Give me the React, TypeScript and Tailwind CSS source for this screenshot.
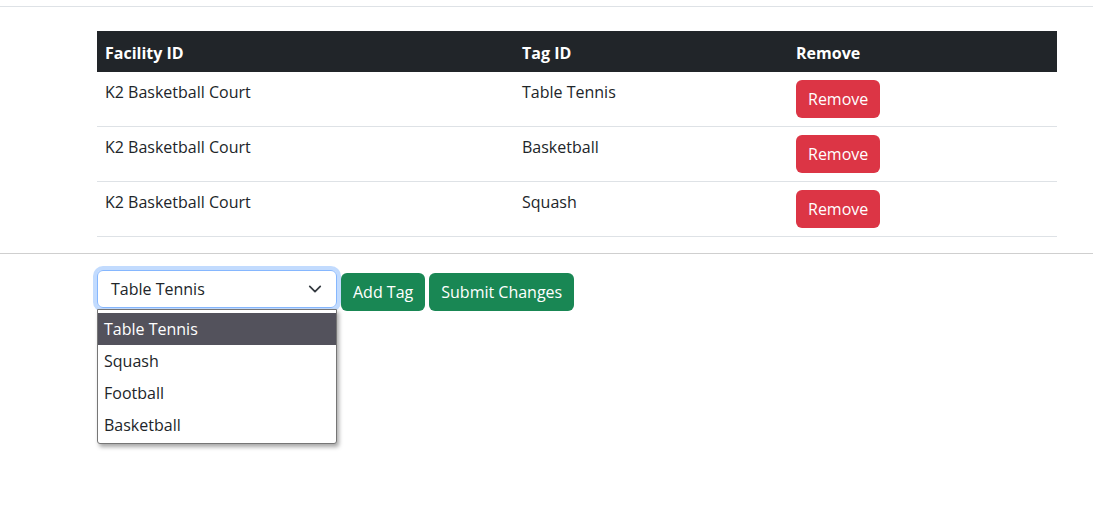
import React from "react";

const rows = ["Table Tennis", "Basketball", "Squash"];
const options = ["Table Tennis", "Squash", "Football", "Basketball"];

function TagRow({ tag }: { tag: string }) {
  return (
    <tr className="border-b border-[#dee2e6]">
      <td className="px-2 py-2 align-top leading-6">K2 Basketball Court</td>
      <td className="px-2 py-2 align-top leading-6">{tag}</td>
      <td className="px-2 py-2">
        <button className="bg-[#dc3545] text-white rounded-md px-3 h-[38px] leading-6">Remove</button>
      </td>
    </tr>
  );
}

export default function App() {
  return (
    <div className="w-[1093px] h-[518px] bg-white text-[#212529] text-base font-['Segoe_UI','Open_Sans',sans-serif] overflow-hidden">
      <div className="pt-[6px]">
        <div className="border-t border-[#dee2e6]" />
      </div>
      <div className="pl-[97px] pr-[36px] pt-6">
        <table className="w-[960px] border-collapse text-left">
          <thead>
            <tr className="bg-[#212529] text-white h-[41px]">
              <th className="px-2 pt-[2px] font-bold w-[417px]">Facility ID</th>
              <th className="px-2 pt-[2px] font-bold w-[274px]">Tag ID</th>
              <th className="px-2 pt-[2px] font-bold">Remove</th>
            </tr>
          </thead>
          <tbody>
            {rows.map((r) => (
              <TagRow key={r} tag={r} />
            ))}
          </tbody>
        </table>
      </div>
      <div className="mt-4 border-t border-[#cfcfcf]" />
      <div className="pl-[97px] pt-4 flex gap-1 items-start">
        <div className="relative">
          <div className="w-[240px] h-[38px] border border-[#86b7fe] rounded-md shadow-[0_0_0_4px_rgba(13,110,253,0.25)] flex items-center justify-between pl-[13px] pr-[14px]">
            <span>Table Tennis</span>
            <svg width="14" height="14" viewBox="0 0 16 16" fill="none" stroke="#343a40" strokeWidth="2" strokeLinecap="round" strokeLinejoin="round">
              <path d="M2 5l6 6 6-6" />
            </svg>
          </div>
          <div className="absolute left-0 top-[39px] w-[240px] bg-white border border-[#767676] rounded-b-[3px] shadow-[2px_3px_4px_rgba(0,0,0,0.35)] pt-[3px] pb-[2px]">
            {options.map((o, i) => (
              <div
                key={o}
                className={i === 0 ? "bg-[#53525c] text-white h-[32px] pl-[6px] flex items-center" : "h-[32px] pl-[6px] flex items-center"}
              >
                {o}
              </div>
            ))}
          </div>
        </div>
        <button className="mt-[3px] bg-[#198754] text-white rounded-md px-3 h-[38px]">Add Tag</button>
        <button className="mt-[3px] bg-[#198754] text-white rounded-md px-3 h-[38px]">Submit Changes</button>
      </div>
    </div>
  );
}
